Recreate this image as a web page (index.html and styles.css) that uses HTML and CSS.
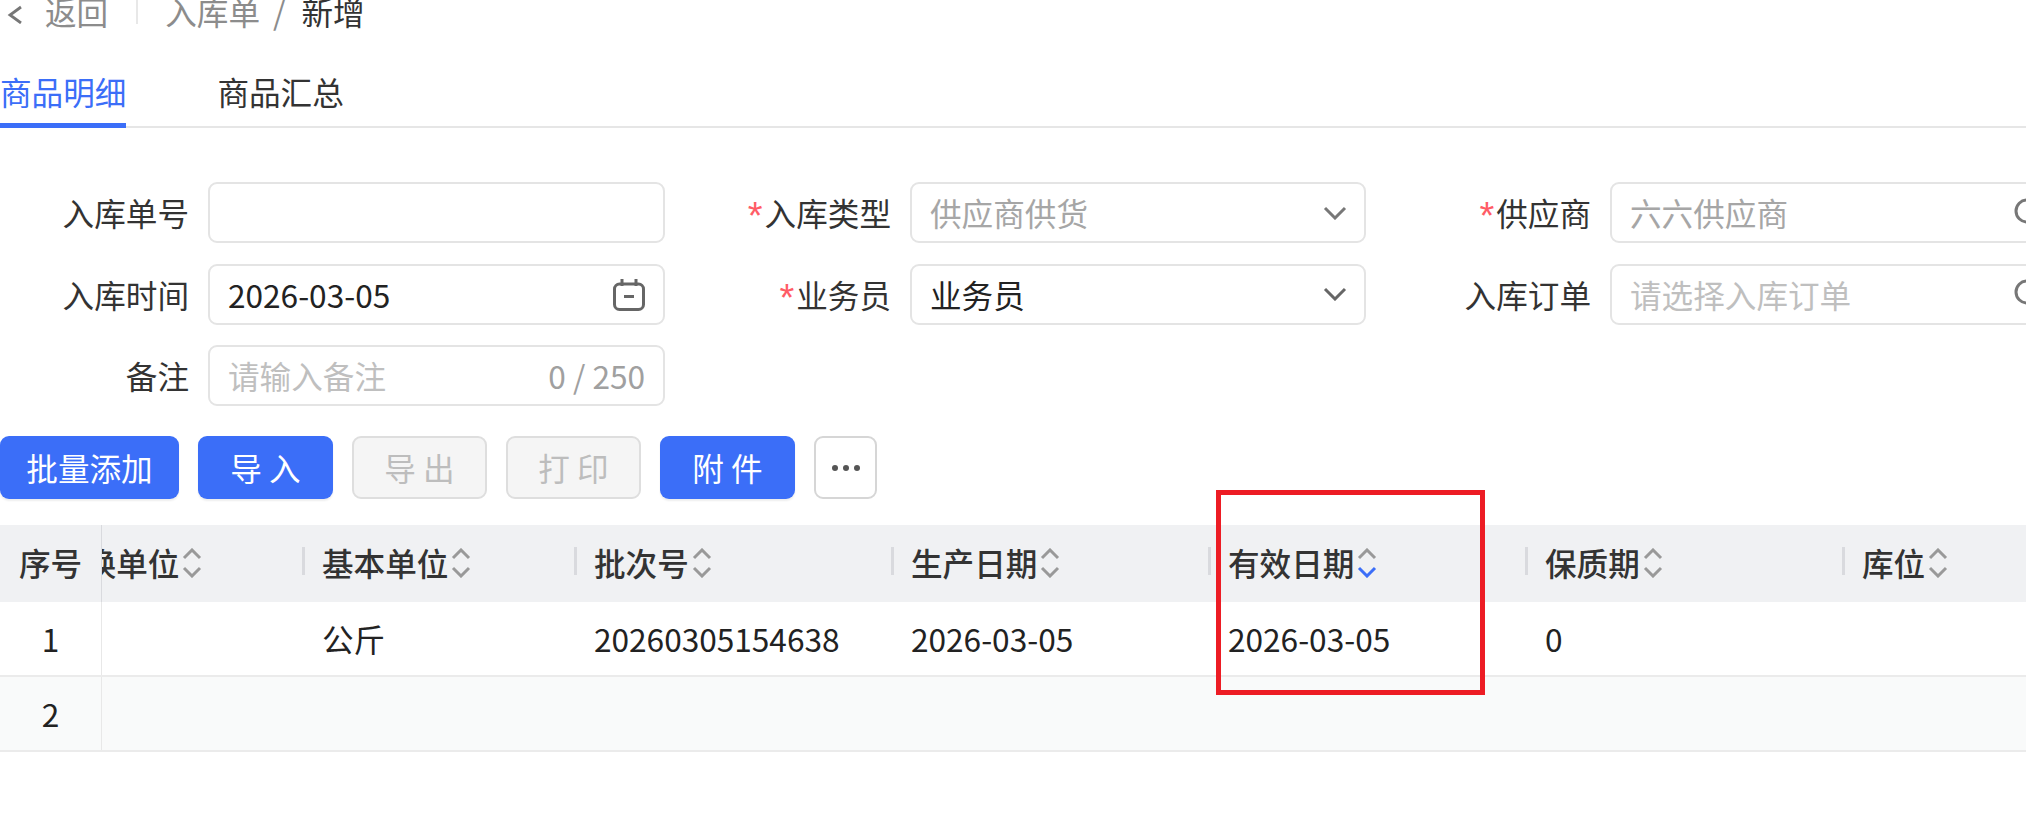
FILE: index.html
```html
<!DOCTYPE html>
<html lang="zh-CN">
<head>
<meta charset="utf-8">
<title>入库单 新增</title>
<link rel="stylesheet" href="styles.css">
</head>
<body>
<header class="crumbs">
  <svg class="back" viewBox="0 0 18 24" width="18" height="24"><path d="M15 7 4 15l11 8" fill="none" stroke="#777" stroke-width="2.800"/></svg>
  <span class="muted back-text">返回</span>
  <i class="crumb-div"></i>
  <span class="muted">入库单</span>
  <span class="muted slash">/</span>
  <span class="current">新增</span>
</header>
<nav class="tabs">
  <a class="tab active">商品明细</a>
  <a class="tab">商品汇总</a>
</nav>
<section class="form">
  <label class="lbl">入库单号</label>
  <div class="field"></div>
  <label class="lbl"><b>*</b>入库类型</label>
  <div class="field ph-dark">供应商供货<svg class="chev" viewBox="0 0 24 14" width="24" height="14"><path d="M2 2l10 10L22 2" fill="none" stroke="#777" stroke-width="3"/></svg></div>
  <label class="lbl"><b>*</b>供应商</label>
  <div class="field ph-dark lookup">六六供应商<svg class="search" viewBox="0 0 30 30" width="30" height="30"><circle cx="13" cy="13" r="11" fill="none" stroke="#777" stroke-width="3"/><path d="M21 21l7 7" stroke="#777" stroke-width="3"/></svg></div>

  <label class="lbl">入库时间</label>
  <div class="field dark">2026-03-05<svg class="cal" viewBox="0 0 32 33" width="32" height="33"><rect x="1.500" y="6" width="29" height="25.500" rx="5" fill="none" stroke="#666" stroke-width="3"/><path d="M9 1v7M23 1v7" stroke="#666" stroke-width="3"/><path d="M11 18.500h10" stroke="#666" stroke-width="3"/></svg></div>
  <label class="lbl"><b>*</b>业务员</label>
  <div class="field dark">业务员<svg class="chev" viewBox="0 0 24 14" width="24" height="14"><path d="M2 2l10 10L22 2" fill="none" stroke="#666" stroke-width="3"/></svg></div>
  <label class="lbl">入库订单</label>
  <div class="field ph lookup">请选择入库订单<svg class="search" viewBox="0 0 30 30" width="30" height="30"><circle cx="13" cy="13" r="11" fill="none" stroke="#777" stroke-width="3"/><path d="M21 21l7 7" stroke="#777" stroke-width="3"/></svg></div>

  <label class="lbl">备注</label>
  <div class="field ph">请输入备注<span class="count">0 / 250</span></div>
</section>
<section class="actions">
  <button class="btn primary wide">批量添加</button>
  <button class="btn primary">导 入</button>
  <button class="btn disabled">导 出</button>
  <button class="btn disabled">打 印</button>
  <button class="btn primary">附 件</button>
  <button class="btn more"><i></i><i></i><i></i></button>
</section>
<section class="table">
  <div class="row head">
    <div class="seq">序号</div>
    <div class="scroll">
      <div class="cells">
        <div class="cell c0">转换单位<svg class="sort" viewBox="0 0 20 30" width="20" height="30"><path d="M2 10l8-8 8 8" class="s"/><path d="M2 20l8 8 8-8" class="s"/></svg></div>
        <div class="cell c1">基本单位<svg class="sort" viewBox="0 0 20 30" width="20" height="30"><path d="M2 10l8-8 8 8" class="s"/><path d="M2 20l8 8 8-8" class="s"/></svg></div>
        <div class="cell">批次号<svg class="sort" viewBox="0 0 20 30" width="20" height="30"><path d="M2 10l8-8 8 8" class="s"/><path d="M2 20l8 8 8-8" class="s"/></svg></div>
        <div class="cell">生产日期<svg class="sort" viewBox="0 0 20 30" width="20" height="30"><path d="M2 10l8-8 8 8" class="s"/><path d="M2 20l8 8 8-8" class="s"/></svg></div>
        <div class="cell">有效日期<svg class="sort" viewBox="0 0 20 30" width="20" height="30"><path d="M2 10l8-8 8 8" class="s"/><path d="M2 20l8 8 8-8" class="s on"/></svg></div>
        <div class="cell">保质期<svg class="sort" viewBox="0 0 20 30" width="20" height="30"><path d="M2 10l8-8 8 8" class="s"/><path d="M2 20l8 8 8-8" class="s"/></svg></div>
        <div class="cell">库位<svg class="sort" viewBox="0 0 20 30" width="20" height="30"><path d="M2 10l8-8 8 8" class="s"/><path d="M2 20l8 8 8-8" class="s"/></svg></div>
      </div>
    </div>
  </div>
  <div class="row">
    <div class="seq">1</div>
    <div class="scroll">
      <div class="cells">
        <div class="cell c0"></div>
        <div class="cell c1">公斤</div>
        <div class="cell">20260305154638</div>
        <div class="cell">2026-03-05</div>
        <div class="cell">2026-03-05</div>
        <div class="cell">0</div>
        <div class="cell"></div>
      </div>
    </div>
  </div>
  <div class="row alt">
    <div class="seq">2</div>
    <div class="scroll"></div>
  </div>
</section>
<div class="highlight"></div>
</body>
</html>
```
FILE: styles.css
```css
* { box-sizing: border-box; }
html, body { margin: 0; height: 100%; overflow: hidden; }
body {
  background: #fff;
  color: #333;
  font: 400 31.6px/44px "Noto Sans CJK SC", "Noto Sans", sans-serif;
  position: relative;
}
.crumbs {
  height: 23px;
  margin-bottom: 2px;
  line-height: 23px;
  display: flex;
  align-items: center;
  white-space: nowrap;
}
.back { margin-left: 6px; margin-right: 21px; }
.muted { color: #8c8c8c; }
.current { color: #333; }
.crumb-div { width: 2px; height: 25px; background: #e8e8e8; margin: 0 27px 0 28px; }
.slash { margin: 0 16px 0 13px; }
.tabs {
  height: 103px;
  display: flex;
  align-items: flex-end;
  gap: 91px;
  border-bottom: 2px solid #e6e6e6;
}
.tab {
  padding-bottom: 10px;
  margin-bottom: -2px;
  border-bottom: 5px solid transparent;
  color: #333;
}
.tab.active { color: #3b6ef8; border-bottom-color: #3b6ef8; }
.form {
  padding-top: 54px;
  display: grid;
  grid-template-columns: 208px 457px 245px 456px 244px 456px;
  grid-auto-rows: 61px;
  row-gap: 20.500px;
  align-items: stretch;
  width: 2066px;
}
.lbl {
  padding-right: 19px;
  text-align: right;
  line-height: 60px;
  white-space: nowrap;
}
.lbl b {
  color: #ff5c66;
  font-weight: 400;
  font-family: "Liberation Mono", monospace;
  font-size: 38px;
  line-height: 30px;
  margin-right: -2px;
  vertical-align: -4px;
}
.field {
  border: 2px solid #e4e4e4;
  border-radius: 9px;
  padding: 0 18px 0 18px;
  line-height: 55px;
  display: flex;
  align-items: center;
  justify-content: space-between;
  white-space: nowrap;
  color: #222;
}
.field.ph { color: #bfbfbf; }
.field.ph-dark { color: #a6a6a6; }
.count { color: #a0a0a0; }
.chev { margin-right: -1px; }
.lookup { padding-right: 20px; }
.actions {
  margin-top: 30px;
  display: flex;
  gap: 19px;
}
.btn {
  width: 135px;
  height: 63px;
  padding: 0;
  border-radius: 9px;
  border: 2px solid transparent;
  font: inherit;
  line-height: 1;
  white-space: nowrap;
}
.wide { width: 179px; }
.primary { background: #3b6ef8; color: #fff; box-shadow: 0 2px 2px rgba(0, 0, 0, .07); }
.disabled { background: #f5f5f5; border-color: #dedede; color: #bdbdbd; }
.more {
  width: 63px;
  background: #fff;
  border-color: #d6d6d6;
  display: flex;
  align-items: center;
  justify-content: center;
  gap: 5px;
}
.more i { width: 6px; height: 6px; border-radius: 50%; background: #555; }
.table { margin-top: 26px; }
.row {
  display: flex;
  height: 75px;
  line-height: 72px;
  border-bottom: 2px solid #ebebeb;
  color: #222;
}
.row.alt { background: #f9fafa; }
.row.head {
  height: 77px;
  line-height: 75px;
  border-bottom: 0;
  background: #f0f1f3;
  font-weight: 500;
  color: #333;
}
.seq {
  width: 102px;
  flex: none;
  text-align: center;
  border-right: 1px solid #d9dade;
  position: relative;
}
.row:not(.head) .seq { border-right-color: #e8e8e8; }
.scroll { flex: 1; min-width: 0; overflow: hidden; }
.cells { display: flex; margin-left: -69px; width: 2400px; }
.cell {
  width: 317px;
  flex: none;
  padding-left: 20px;
  position: relative;
  white-space: nowrap;
  display: flex;
  align-items: center;
  height: 71px;
}
.head .cell { height: 75px; }
.c0 { width: 269px; }
.c1 { width: 272px; }
.head .cell::before {
  content: "";
  position: absolute;
  left: 0;
  top: 22px;
  width: 3px;
  height: 28px;
  background: #d9dade;
}
.sort { margin-left: 3px; flex: none; }
.s { fill: none; stroke: #999; stroke-width: 3; }
.s.on { stroke: #3b6ef8; }
.highlight {
  position: absolute;
  left: 1216px;
  top: 490px;
  width: 269px;
  height: 205px;
  border: 5px solid #ed1c24;
  pointer-events: none;
}
```
